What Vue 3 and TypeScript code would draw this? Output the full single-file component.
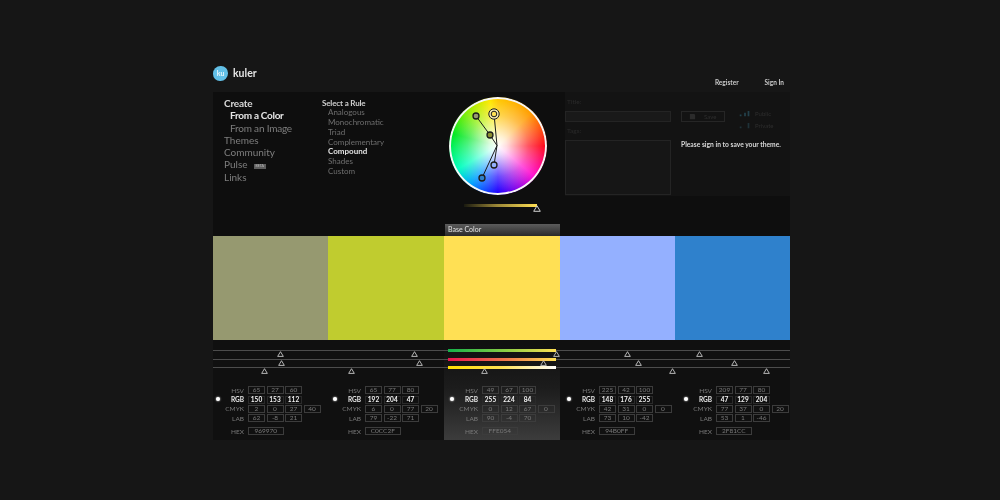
<script setup lang="ts">
const navItems = [
  { label: 'Create', cls: 'nav-strong' },
  { label: 'From a Color', cls: 'nav-sub nav-active' },
  { label: 'From an Image', cls: 'nav-sub' },
  { label: 'Themes', cls: '' },
  { label: 'Community', cls: '' },
  { label: 'Pulse', cls: '', beta: true },
  { label: 'Links', cls: '' },
]
const rules = ['Analogous', 'Monochromatic', 'Triad', 'Complementary', 'Compound', 'Shades', 'Custom']
const swatches = ['#969970', '#C0CC2F', '#FFE054', '#94B0FF', '#2F81CC']
const thumbs = [
  [67, 201, 343, 414, 486],
  [68, 206, 330, 425, 521],
  [51, 138, 271, 459, 553],
]
const colBars = [
  'linear-gradient(90deg,#12b04a,#8fcf45 55%,#ffe054)',
  'linear-gradient(90deg,#e8124f,#f07a4a 55%,#ffe054)',
  'linear-gradient(90deg,#ffe000,#ffe054 50%,#fff)',
]
const columns = [
  { hsv: ['65', '27', '60'], rgb: ['150', '153', '112'], cmyk: ['2', '0', '27', '40'], lab: ['62', '-8', '21'], hex: '969970' },
  { hsv: ['65', '77', '80'], rgb: ['192', '204', '47'], cmyk: ['6', '0', '77', '20'], lab: ['79', '-22', '71'], hex: 'C0CC2F' },
  { hsv: ['49', '67', '100'], rgb: ['255', '224', '84'], cmyk: ['0', '12', '67', '0'], lab: ['90', '-4', '70'], hex: 'FFE054' },
  { hsv: ['225', '42', '100'], rgb: ['148', '176', '255'], cmyk: ['42', '31', '0', '0'], lab: ['73', '10', '-42'], hex: '94B0FF' },
  { hsv: ['209', '77', '80'], rgb: ['47', '129', '204'], cmyk: ['77', '37', '0', '20'], lab: ['53', '1', '-46'], hex: '2F81CC' },
]
const rows = [
  { key: 'hsv', label: 'HSV' },
  { key: 'rgb', label: 'RGB' },
  { key: 'cmyk', label: 'CMYK' },
  { key: 'lab', label: 'LAB' },
] as const
</script>

<template>
  <div class="page">
    <div class="app">
      <header class="header soft">
        <div class="brand">
          <span class="logo">ku</span>
          <span class="brand-name">kuler</span>
        </div>
        <nav class="account">
          <span>Register</span>
          <span>Sign In</span>
        </nav>
      </header>

      <section class="top soft">
        <ul class="nav">
          <li v-for="item in navItems" :key="item.label" :class="item.cls">
            {{ item.label }}<span v-if="item.beta" class="beta">BETA</span>
          </li>
        </ul>
        <div class="rules">
          <div class="rules-title">Select a Rule</div>
          <ul class="rule-list">
            <li v-for="r in rules" :key="r" :class="{ 'rule-active': r === 'Compound' }">{{ r }}</li>
          </ul>
        </div>
        <div class="wheel-col">
          <div class="wheel">
            <svg class="wheel-marks" viewBox="0 0 98 98" width="98" height="98">
              <g fill="none" stroke="#1c1c1c" stroke-width="1">
                <path d="M27 19 L41 38 L48 48.5 L45 17" />
                <path d="M48 48.5 L33 81" />
                <path d="M48 48.5 L45 68" />
              </g>
              <g stroke="#1c1c1c" stroke-width="1.3">
                <circle cx="27" cy="19" r="3" fill="#969970" />
                <circle cx="41" cy="38" r="3" fill="#8d9030" />
                <circle cx="45" cy="68" r="3" fill="#94B0FF" />
                <circle cx="33" cy="81" r="3" fill="#2F81CC" />
              </g>
              <circle cx="45" cy="17" r="5.2" fill="#f4e9b0" stroke="#1c1c1c" stroke-width="1" />
              <circle cx="45" cy="17" r="2.8" fill="#FFE054" stroke="#1c1c1c" stroke-width="1" />
            </svg>
          </div>
          <div class="bright">
            <span class="bright-track"></span>
            <svg class="tri bright-thumb" viewBox="0 0 8 7" width="8" height="7"><path d="M4 .8 L7.3 6.3 H.7 Z" /></svg>
          </div>
          <div class="base-tab">Base Color</div>
        </div>
        <div class="form">
          <div class="form-left">
            <div class="dim-label">Title:</div>
            <div class="field"></div>
            <div class="dim-label tags">Tags:</div>
            <div class="field area"></div>
          </div>
          <div class="form-right">
            <div class="save-row">
              <div class="save-btn">
                <svg viewBox="0 0 8 8" width="7" height="7"><path d="M1 1h5l1 1v5H1z" fill="#2b2b2b" /></svg>
                <span>Save</span>
              </div>
              <div class="privacy">
                <div class="privacy-row">
                  <svg viewBox="0 0 16 8" width="14" height="7"><path d="M2 7V5h2v2zM7 7V3h2v4zM11 7V1h2v6z" fill="#23404a" /></svg>
                  <span>Public</span>
                </div>
                <div class="privacy-row">
                  <svg viewBox="0 0 16 8" width="14" height="7"><path d="M2 7V5h2v2zM11 7V1h2v6z" fill="#1f3238" /></svg>
                  <span>Private</span>
                </div>
              </div>
            </div>
            <div class="signin-note">Please sign in to save your theme.</div>
          </div>
        </div>
      </section>

      <section class="swatches">
        <div v-for="c in swatches" :key="c" class="swatch" :style="{ background: c }"></div>
      </section>

      <section class="lower soft">
        <div class="highlight"></div>
        <div class="sliders">
          <div v-for="(row, i) in thumbs" :key="i" class="slider">
            <span class="col-bar" :style="{ background: colBars[i] }"></span>
            <svg v-for="x in row" :key="x" class="tri thumb" :style="{ left: x - 3.5 + 'px' }" viewBox="0 0 8 7" width="7" height="6"><path d="M4 .8 L7.3 6.3 H.7 Z" /></svg>
          </div>
        </div>
        <div class="data">
          <div v-for="col in columns" :key="col.hex" class="data-col">
            <span class="radio"></span>
            <div class="table">
              <div v-for="r in rows" :key="r.key" class="row" :class="{ 'row-rgb': r.key === 'rgb' }">
                <span class="label">{{ r.label }}</span>
                <span v-for="(v, i) in col[r.key]" :key="i" class="cell">{{ v }}</span>
              </div>
              <div class="row row-hex">
                <span class="label">HEX</span>
                <span class="cell cell-hex">{{ col.hex }}</span>
              </div>
            </div>
          </div>
        </div>
      </section>
    </div>
  </div>
</template>

<style>
html, body { margin: 0; background: #161616; }
</style>

<style scoped>
.page {
  width: 1000px;
  height: 500px;
  box-sizing: border-box;
  padding: 60px 0 0 213px;
  background: #161616;
  overflow: hidden;
  font-family: Lato, "Open Sans", sans-serif;
}
.app { width: 577px; }
.soft { filter: blur(.35px); }
ul { list-style: none; margin: 0; padding: 0; }

.header {
  height: 32px;
  display: flex;
  justify-content: space-between;
}
.brand { display: flex; align-items: center; height: 26px; gap: 5px; }
.logo {
  width: 15px;
  height: 15px;
  border-radius: 50% 46% 50% 46%;
  background: #62bfe6;
  color: #e8f6fb;
  font-size: 7px;
  font-weight: 700;
  display: flex;
  align-items: center;
  justify-content: center;
}
.brand-name { color: #e4e4e4; font-size: 10.5px; font-weight: 700; }
.account {
  display: flex;
  gap: 26px;
  align-items: flex-end;
  padding: 0 6px 6px 0;
  color: #c8c8c8;
  font-size: 6.5px;
  font-weight: 700;
}

.top {
  height: 144px;
  display: flex;
  background: #0e0e0e;
}
.nav {
  width: 109px;
  box-sizing: border-box;
  padding: 5px 0 0 11px;
  color: #7e7e7e;
  font-size: 10px;
  line-height: 12.3px;
}
.nav-strong { color: #d8d8d8; font-weight: 700; letter-spacing: -.2px; }
.nav-sub { padding-left: 6px; letter-spacing: -.2px; }
.nav-active { color: #e6e6e6; font-weight: 700; letter-spacing: -.3px; }
.beta {
  display: inline-block;
  margin-left: 6px;
  padding: 0 2px;
  background: #5e5e5e;
  color: #bbb;
  font-size: 3.5px;
  line-height: 5px;
  vertical-align: 1px;
}
.rules {
  width: 123px;
  box-sizing: border-box;
  padding-top: 6px;
}
.rules-title {
  color: #d0d0d0;
  font-size: 8px;
  line-height: 10px;
  font-weight: 700;
  letter-spacing: -.15px;
}
.rule-list {
  padding-left: 6px;
  color: #6e6e6e;
  font-size: 8px;
  line-height: 9.85px;
}
.rule-active { color: #e2e2e2; font-weight: 700; }

.wheel-col {
  width: 116px;
  flex: none;
  display: flex;
  flex-direction: column;
  padding-top: 5px;
  box-sizing: border-box;
}
.wheel {
  position: relative;
  width: 98px;
  height: 98px;
  margin-left: 4px;
  box-sizing: border-box;
  border-radius: 50%;
  box-shadow: inset 0 0 0 2px #f6f6f6;
  background:
    radial-gradient(closest-side, #fff 0%, rgba(255,255,255,.85) 18%, rgba(255,255,255,.3) 62%, rgba(255,255,255,0) 95%),
    conic-gradient(from 0deg, #ffc800 0deg, #ff9c00 45deg, #ff0a1e 90deg, #ff10d0 130deg, #2000ff 180deg, #00a0ff 215deg, #00ffc0 240deg, #00e820 285deg, #a8f000 325deg, #ffe800 350deg, #ffc800 360deg);
}
.wheel-marks { position: absolute; left: 0; top: 0; }
.bright {
  position: relative;
  height: 29px;
  flex: none;
}
.bright-track {
  position: absolute;
  left: 19px;
  top: 9px;
  width: 73px;
  height: 2.5px;
  background: linear-gradient(90deg, #1a1a10, #9a8636 45%, #ffe054);
}
.bright-thumb { position: absolute; left: 88px; top: 10px; }
.tri path { fill: #111; stroke: #cfcfcf; stroke-width: 1; }
.base-tab {
  height: 12px;
  margin-right: 1px;
  background: linear-gradient(#5c5c5c, #2a2a2a);
  color: #e4e4e4;
  font-size: 7px;
  line-height: 11px;
  padding-left: 3px;
}

.form {
  flex: 1;
  display: flex;
  margin-left: 4px;
  padding-top: 5px;
  background: #131313;
  height: 104px;
  box-sizing: border-box;
}
.form-left { width: 106px; flex: none; }
.dim-label { color: #2a2a2a; font-size: 6.5px; line-height: 9px; padding-left: 2px; }
.tags { margin-top: 4px; }
.field {
  margin-top: 5px;
  height: 11px;
  box-sizing: border-box;
  border: 1px solid #242424;
  background: #191919;
}
.area { height: 55px; margin-top: 5px; background: #161616; }
.form-right { margin-left: 10px; flex: 1; }
.save-row { display: flex; margin-top: 3px; height: 27px; }
.save-btn {
  width: 44px;
  height: 11px;
  box-sizing: border-box;
  border: 1px solid #262626;
  margin-top: 11px;
  display: flex;
  align-items: center;
  gap: 8px;
  padding-left: 7px;
  color: #2e2e2e;
  font-size: 6px;
}
.privacy { margin-left: 13px; margin-top: 7px; }
.privacy-row {
  display: flex;
  align-items: center;
  gap: 3px;
  height: 12.5px;
  color: #2e2e2e;
  font-size: 6px;
}
.signin-note {
  margin-top: 13px;
  color: #d8d8d8;
  font-size: 6.7px;
  line-height: 9px;
  font-weight: 700;
  white-space: nowrap;
}

.swatches { display: grid; grid-template-columns: 115px 116px 116px 115px 115px; height: 104px; }

.lower {
  position: relative;
  height: 100px;
  background: #101010;
}
.highlight {
  position: absolute;
  left: 231px;
  top: 5px;
  bottom: 0;
  width: 116px;
  background: linear-gradient(#101010 0%, #1c1c1c 45%, #3c3c3c 100%);
}
.sliders { position: relative; padding-top: 10px; height: 36px; box-sizing: border-box; }
.slider {
  position: relative;
  height: 8.6px;
  box-sizing: border-box;
  border-top: 1px solid #4c4c4c;
}
.col-bar {
  position: absolute;
  left: 235px;
  top: -2px;
  width: 108px;
  height: 3px;
}
.thumb { position: absolute; top: 0; }

.data {
  position: relative;
  display: grid;
  grid-template-columns: repeat(4, 117px) 109px;
  padding-top: 9.5px;
}
.data-col { position: relative; padding-left: 35px; }
.radio {
  position: absolute;
  left: 3px;
  top: 11px;
  width: 4px;
  height: 4px;
  border-radius: 50%;
  background: #fff;
  box-shadow: 0 0 2px #fff;
}
.row {
  display: flex;
  gap: 1.5px;
  height: 9.4px;
  align-items: center;
  font-size: 6.5px;
  color: #7a7a7a;
}
.label {
  position: absolute;
  left: 0;
  width: 31px;
  text-align: right;
  color: #7a7a7a;
}
.row-rgb .label { color: #e8e8e8; font-weight: 700; }
.row-rgb .cell { color: #f2f2f2; font-weight: 700; border-color: #2a2a2a; }
.cell {
  width: 17px;
  height: 8px;
  box-sizing: border-box;
  border: 1px solid #3c3c3c;
  text-align: center;
  line-height: 6px;
}
.row-hex { margin-top: 3.5px; }
.cell-hex { width: 35.5px; }
</style>
